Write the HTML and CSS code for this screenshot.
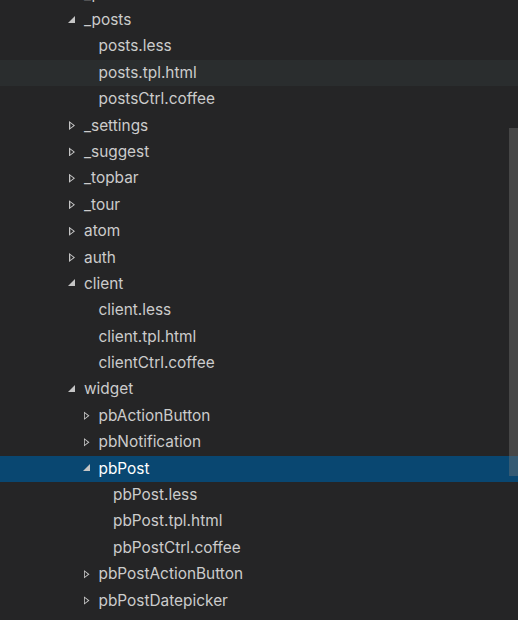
FILE: index.html
```html
<!DOCTYPE html>
<html>
<head>
<meta charset="utf-8">
<link rel="stylesheet" href="styles.css">
</head>
<body>
<div class="tree">
  <div class="row d1"><span class="tw open"></span><span class="label">_profile</span></div>
  <div class="row d1"><span class="tw open"></span><span class="label">_posts</span></div>
  <div class="row d2"><span class="tw"></span><span class="label">posts.less</span></div>
  <div class="row d2 hover"><span class="tw"></span><span class="label">posts.tpl.html</span></div>
  <div class="row d2"><span class="tw"></span><span class="label">postsCtrl.coffee</span></div>
  <div class="row d1"><span class="tw closed"></span><span class="label">_settings</span></div>
  <div class="row d1"><span class="tw closed"></span><span class="label">_suggest</span></div>
  <div class="row d1"><span class="tw closed"></span><span class="label">_topbar</span></div>
  <div class="row d1"><span class="tw closed"></span><span class="label">_tour</span></div>
  <div class="row d1"><span class="tw closed"></span><span class="label">atom</span></div>
  <div class="row d1"><span class="tw closed"></span><span class="label">auth</span></div>
  <div class="row d1"><span class="tw open"></span><span class="label">client</span></div>
  <div class="row d2"><span class="tw"></span><span class="label">client.less</span></div>
  <div class="row d2"><span class="tw"></span><span class="label">client.tpl.html</span></div>
  <div class="row d2"><span class="tw"></span><span class="label">clientCtrl.coffee</span></div>
  <div class="row d1"><span class="tw open"></span><span class="label">widget</span></div>
  <div class="row d2"><span class="tw closed"></span><span class="label">pbActionButton</span></div>
  <div class="row d2"><span class="tw closed"></span><span class="label">pbNotification</span></div>
  <div class="row d2 selected"><span class="tw open"></span><span class="label">pbPost</span></div>
  <div class="row d3"><span class="tw"></span><span class="label">pbPost.less</span></div>
  <div class="row d3"><span class="tw"></span><span class="label">pbPost.tpl.html</span></div>
  <div class="row d3"><span class="tw"></span><span class="label">pbPostCtrl.coffee</span></div>
  <div class="row d2"><span class="tw closed"></span><span class="label">pbPostActionButton</span></div>
  <div class="row d2"><span class="tw closed"></span><span class="label">pbPostDatepicker</span></div>
</div>
<div class="scrollbar"></div>
</body>
</html>
```
FILE: styles.css
```css
html, body {
  margin: 0;
  padding: 0;
  background: #252526;
  width: 518px;
  height: 620px;
  overflow: hidden;
}
.tree {
  margin-top: -19.4px;
  font-family: Inter, "Noto Sans", sans-serif;
  font-size: 15.4px;
  color: #cccccc;
}
.row {
  height: 26.4px;
  display: flex;
  align-items: center;
  box-sizing: border-box;
}
.d1 { padding-left: 68px; }
.d2 { padding-left: 82.5px; }
.d3 { padding-left: 97px; }
.hover { background: #2a2d2e; }
.selected { background: #094771; color: #ffffff; }
.tw {
  width: 16px;
  height: 26.4px;
  flex: none;
  position: relative;
}
.tw.open::before {
  content: "";
  position: absolute;
  left: 0;
  top: 8.5px;
  width: 0;
  height: 0;
  border-style: solid;
  border-width: 0 0 7px 7px;
  border-color: transparent transparent #c5c5c5 transparent;
}
.tw.closed::before {
  content: "";
  position: absolute;
  left: 1px;
  top: 8.5px;
  width: 6px;
  height: 9px;
  background: linear-gradient(#c5c5c5, #c5c5c5);
  clip-path: polygon(0 0, 100% 50%, 0 100%, 0 0, 1.3px 2px, 1.3px calc(100% - 2px), calc(100% - 1.6px) 50%, 1.3px 2px);
}
.label {
  white-space: nowrap;
  line-height: 26.4px;
}
.scrollbar {
  position: absolute;
  left: 509px;
  top: 128px;
  width: 9px;
  height: 348px;
  background: rgba(121, 121, 121, 0.4);
}
```
